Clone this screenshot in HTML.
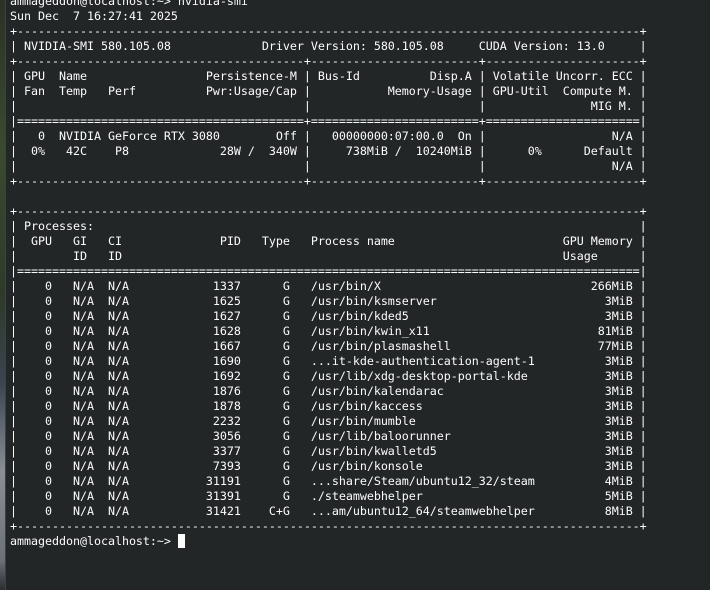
<!DOCTYPE html>
<html><head><meta charset="utf-8"><style>
html,body{margin:0;padding:0;width:710px;height:590px;overflow:hidden;background:#232627;}
#strip{position:absolute;left:0;top:0;width:5px;height:590px;background:linear-gradient(#2b3226 0%,#3a4a30 25%,#2f3a2a 50%,#3b4450 65%,#8a8f95 80%,#6c7077 95%,#2a2d30 100%);}
#edge{position:absolute;left:5px;top:0;width:1px;height:590px;background:#3d4144;}
pre{position:absolute;left:10px;top:-6px;margin:0;font-family:"DejaVu Sans Mono","Liberation Mono",monospace;font-size:11.7px;letter-spacing:-0.04px;line-height:15px;color:#fcfcfc;white-space:pre;}
#cur{position:absolute;left:178px;top:534px;width:7px;height:14px;background:#fcfcfc;}
</style></head><body>
<div id="strip"></div><div id="edge"></div>
<pre>ammageddon@localhost:~&gt; nvidia-smi
Sun Dec  7 16:27:41 2025
+-----------------------------------------------------------------------------------------+
| NVIDIA-SMI 580.105.08             Driver Version: 580.105.08     CUDA Version: 13.0     |
+-----------------------------------------+------------------------+----------------------+
| GPU  Name                 Persistence-M | Bus-Id          Disp.A | Volatile Uncorr. ECC |
| Fan  Temp   Perf          Pwr:Usage/Cap |           Memory-Usage | GPU-Util  Compute M. |
|                                         |                        |               MIG M. |
|=========================================+========================+======================|
|   0  NVIDIA GeForce RTX 3080        Off |   00000000:07:00.0  On |                  N/A |
|  0%   42C    P8             28W /  340W |     738MiB /  10240MiB |      0%      Default |
|                                         |                        |                  N/A |
+-----------------------------------------+------------------------+----------------------+

+-----------------------------------------------------------------------------------------+
| Processes:                                                                              |
|  GPU   GI   CI              PID   Type   Process name                        GPU Memory |
|        ID   ID                                                               Usage      |
|=========================================================================================|
|    0   N/A  N/A            1337      G   /usr/bin/X                              266MiB |
|    0   N/A  N/A            1625      G   /usr/bin/ksmserver                        3MiB |
|    0   N/A  N/A            1627      G   /usr/bin/kded5                            3MiB |
|    0   N/A  N/A            1628      G   /usr/bin/kwin_x11                        81MiB |
|    0   N/A  N/A            1667      G   /usr/bin/plasmashell                     77MiB |
|    0   N/A  N/A            1690      G   ...it-kde-authentication-agent-1          3MiB |
|    0   N/A  N/A            1692      G   /usr/lib/xdg-desktop-portal-kde           3MiB |
|    0   N/A  N/A            1876      G   /usr/bin/kalendarac                       3MiB |
|    0   N/A  N/A            1878      G   /usr/bin/kaccess                          3MiB |
|    0   N/A  N/A            2232      G   /usr/bin/mumble                           3MiB |
|    0   N/A  N/A            3056      G   /usr/lib/baloorunner                      3MiB |
|    0   N/A  N/A            3377      G   /usr/bin/kwalletd5                        3MiB |
|    0   N/A  N/A            7393      G   /usr/bin/konsole                          3MiB |
|    0   N/A  N/A           31191      G   ...share/Steam/ubuntu12_32/steam          4MiB |
|    0   N/A  N/A           31391      G   ./steamwebhelper                          5MiB |
|    0   N/A  N/A           31421    C+G   ...am/ubuntu12_64/steamwebhelper          8MiB |
+-----------------------------------------------------------------------------------------+
ammageddon@localhost:~&gt; </pre>
<div id="cur"></div>
</body></html>
